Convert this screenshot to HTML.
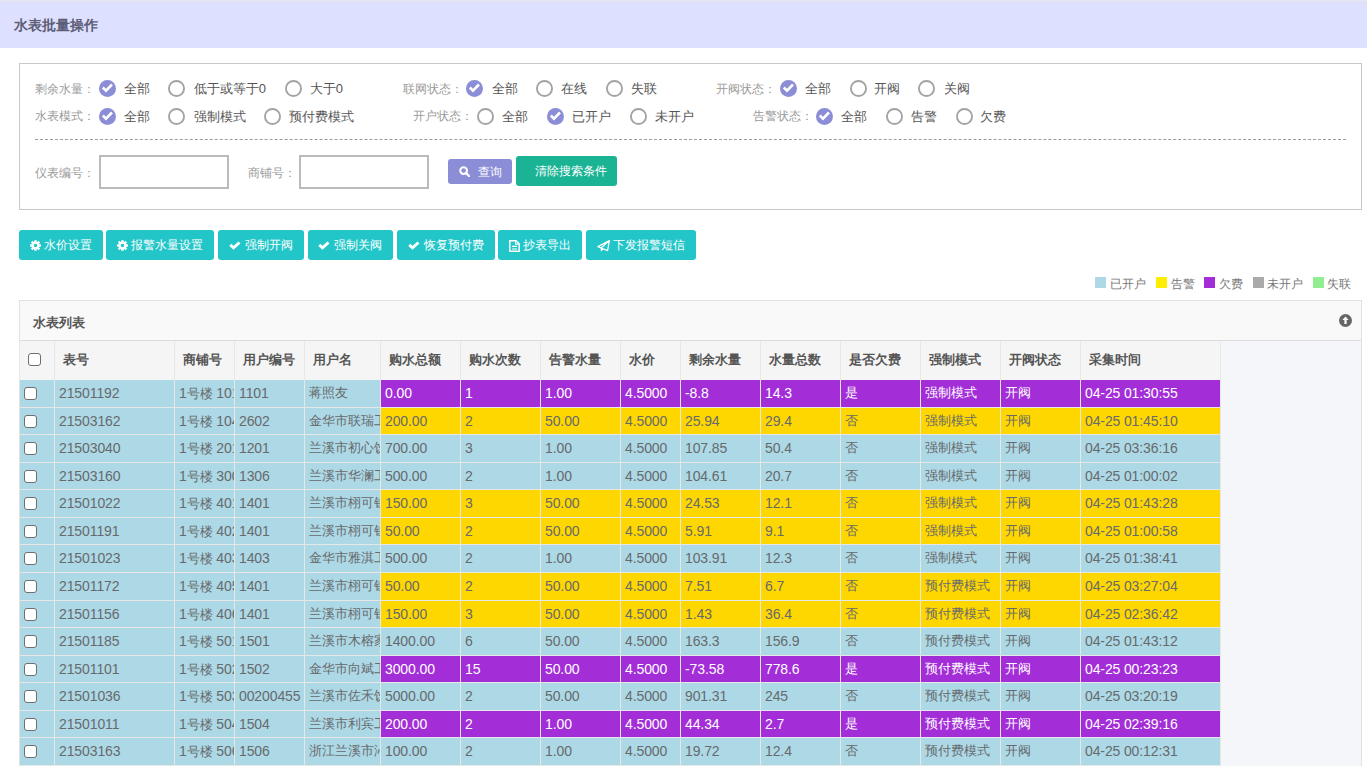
<!DOCTYPE html>
<html><head><meta charset="utf-8"><style>
html,body{margin:0;padding:0;}
body{width:1367px;height:766px;overflow:hidden;position:relative;background:#fff;font-family:"Liberation Sans", sans-serif;}
.ab{position:absolute;}
.hdr{left:0;top:0;width:1367px;height:48px;background:#dde0fe;}
.hdr .strip{position:absolute;left:0;top:0;width:1367px;height:3px;background:linear-gradient(#e4e5f5,#e4e5f5 1px,#e2e4f5 1px,#e2e4f5 2px,#dfe2f5 2px);}
.hdr .t{position:absolute;left:14px;top:15px;font-size:14px;font-weight:bold;color:#5d5d78;line-height:20px;white-space:nowrap;}
.panel{left:19px;top:63px;width:1341px;height:145px;border:1px solid #c8c8c8;background:#fff;}
.glab{font-size:12px;color:#9a9a9a;line-height:20px;white-space:nowrap;}
.rlab{font-size:13px;color:#555;line-height:20px;white-space:nowrap;margin-top:0.5px;}
.dash{left:35px;top:139px;width:1311px;height:0;border-top:1px dashed #9c9c9c;}
.inp{top:155px;width:126px;height:30px;border:2px solid #bbb;background:#fff;}
.qbtn{left:448px;top:159px;width:64px;height:25px;border-radius:3px;background:#8b8dd6;color:#fff;font-size:12px;}
.cbtn{left:516px;top:156px;width:101px;height:30px;border-radius:3px;background:#1ab394;color:#fff;font-size:12px;}
.btn{position:absolute;top:230px;height:30px;box-sizing:border-box;padding-top:1px;border-radius:3px;background:#23c6c8;color:#fff;font-size:12px;display:flex;align-items:center;justify-content:center;white-space:nowrap;}
.btn svg{margin-right:3px;}
.leg{font-size:12px;color:#777;line-height:20px;white-space:nowrap;}
.tpanel{left:19px;top:300px;width:1341px;height:470px;border:1px solid #e2e2e2;border-bottom:none;background:#f5f6fa;}
.ttitle{left:20px;top:301px;width:1341px;height:39px;background:#f9f9f9;border-bottom:1px solid #dcdcdc;}
.th{background:#f5f5f5;box-sizing:border-box;border-left:1px solid #e7e7e7;}
.tht{font-size:13px;font-weight:bold;color:#555;line-height:20px;white-space:nowrap;}
.td{overflow:hidden;white-space:nowrap;font-size:13px;line-height:26.54px;}
.td span{padding-left:4px;}
.n{font-style:normal;font-size:14px;letter-spacing:-0.1px;}
.cb{box-sizing:border-box;border:1px solid #6e6e6e;border-radius:3px;background:#fff;}
.rowbg{left:20px;top:341px;width:1201px;height:425px;background:#e7e7e7;}
</style></head><body>
<div class="ab hdr"><div class="strip"></div><div class="t">水表批量操作</div></div>
<div class="ab panel"></div>
<div class="ab glab" style="left:34.5px;top:78.7px">剩余水量：</div>
<div class="ab" style="left:99px;top:80.2px;width:17px;height:17px"><svg width="17" height="17" viewBox="0 0 17 17"><circle cx="8.5" cy="8.5" r="8.5" fill="#8b8dd6"/><path d="M3.8 7.5 L7 10.7 L13 4.5" fill="none" stroke="#fff" stroke-width="2.6" stroke-linecap="butt" stroke-linejoin="miter"/></svg></div>
<div class="ab rlab" style="left:124px;top:78.7px">全部</div>
<div class="ab" style="left:168px;top:80.2px;width:17px;height:17px"><svg width="17" height="17" viewBox="0 0 17 17"><circle cx="8.5" cy="8.5" r="7.55" fill="#fff" stroke="#a3a3a3" stroke-width="1.9"/></svg></div>
<div class="ab rlab" style="left:193.7px;top:78.7px">低于或等于0</div>
<div class="ab" style="left:285px;top:80.2px;width:17px;height:17px"><svg width="17" height="17" viewBox="0 0 17 17"><circle cx="8.5" cy="8.5" r="7.55" fill="#fff" stroke="#a3a3a3" stroke-width="1.9"/></svg></div>
<div class="ab rlab" style="left:309.8px;top:78.7px">大于0</div>
<div class="ab glab" style="left:34.5px;top:106.2px">水表模式：</div>
<div class="ab" style="left:99px;top:107.7px;width:17px;height:17px"><svg width="17" height="17" viewBox="0 0 17 17"><circle cx="8.5" cy="8.5" r="8.5" fill="#8b8dd6"/><path d="M3.8 7.5 L7 10.7 L13 4.5" fill="none" stroke="#fff" stroke-width="2.6" stroke-linecap="butt" stroke-linejoin="miter"/></svg></div>
<div class="ab rlab" style="left:124px;top:106.2px">全部</div>
<div class="ab" style="left:168px;top:107.7px;width:17px;height:17px"><svg width="17" height="17" viewBox="0 0 17 17"><circle cx="8.5" cy="8.5" r="7.55" fill="#fff" stroke="#a3a3a3" stroke-width="1.9"/></svg></div>
<div class="ab rlab" style="left:193.7px;top:106.2px">强制模式</div>
<div class="ab" style="left:264.3px;top:107.7px;width:17px;height:17px"><svg width="17" height="17" viewBox="0 0 17 17"><circle cx="8.5" cy="8.5" r="7.55" fill="#fff" stroke="#a3a3a3" stroke-width="1.9"/></svg></div>
<div class="ab rlab" style="left:289px;top:106.2px">预付费模式</div>
<div class="ab glab" style="left:402.5px;top:78.7px">联网状态：</div>
<div class="ab" style="left:466px;top:80.2px;width:17px;height:17px"><svg width="17" height="17" viewBox="0 0 17 17"><circle cx="8.5" cy="8.5" r="8.5" fill="#8b8dd6"/><path d="M3.8 7.5 L7 10.7 L13 4.5" fill="none" stroke="#fff" stroke-width="2.6" stroke-linecap="butt" stroke-linejoin="miter"/></svg></div>
<div class="ab rlab" style="left:491.6px;top:78.7px">全部</div>
<div class="ab" style="left:536px;top:80.2px;width:17px;height:17px"><svg width="17" height="17" viewBox="0 0 17 17"><circle cx="8.5" cy="8.5" r="7.55" fill="#fff" stroke="#a3a3a3" stroke-width="1.9"/></svg></div>
<div class="ab rlab" style="left:560.8px;top:78.7px">在线</div>
<div class="ab" style="left:605.8px;top:80.2px;width:17px;height:17px"><svg width="17" height="17" viewBox="0 0 17 17"><circle cx="8.5" cy="8.5" r="7.55" fill="#fff" stroke="#a3a3a3" stroke-width="1.9"/></svg></div>
<div class="ab rlab" style="left:631px;top:78.7px">失联</div>
<div class="ab glab" style="left:412.8px;top:106.2px">开户状态：</div>
<div class="ab" style="left:477px;top:107.7px;width:17px;height:17px"><svg width="17" height="17" viewBox="0 0 17 17"><circle cx="8.5" cy="8.5" r="7.55" fill="#fff" stroke="#a3a3a3" stroke-width="1.9"/></svg></div>
<div class="ab rlab" style="left:502px;top:106.2px">全部</div>
<div class="ab" style="left:546.7px;top:107.7px;width:17px;height:17px"><svg width="17" height="17" viewBox="0 0 17 17"><circle cx="8.5" cy="8.5" r="8.5" fill="#8b8dd6"/><path d="M3.8 7.5 L7 10.7 L13 4.5" fill="none" stroke="#fff" stroke-width="2.6" stroke-linecap="butt" stroke-linejoin="miter"/></svg></div>
<div class="ab rlab" style="left:572.4px;top:106.2px">已开户</div>
<div class="ab" style="left:630px;top:107.7px;width:17px;height:17px"><svg width="17" height="17" viewBox="0 0 17 17"><circle cx="8.5" cy="8.5" r="7.55" fill="#fff" stroke="#a3a3a3" stroke-width="1.9"/></svg></div>
<div class="ab rlab" style="left:654.5px;top:106.2px">未开户</div>
<div class="ab glab" style="left:715.6px;top:78.7px">开阀状态：</div>
<div class="ab" style="left:779.8px;top:80.2px;width:17px;height:17px"><svg width="17" height="17" viewBox="0 0 17 17"><circle cx="8.5" cy="8.5" r="8.5" fill="#8b8dd6"/><path d="M3.8 7.5 L7 10.7 L13 4.5" fill="none" stroke="#fff" stroke-width="2.6" stroke-linecap="butt" stroke-linejoin="miter"/></svg></div>
<div class="ab rlab" style="left:805px;top:78.7px">全部</div>
<div class="ab" style="left:849.8px;top:80.2px;width:17px;height:17px"><svg width="17" height="17" viewBox="0 0 17 17"><circle cx="8.5" cy="8.5" r="7.55" fill="#fff" stroke="#a3a3a3" stroke-width="1.9"/></svg></div>
<div class="ab rlab" style="left:873.5px;top:78.7px">开阀</div>
<div class="ab" style="left:918.4px;top:80.2px;width:17px;height:17px"><svg width="17" height="17" viewBox="0 0 17 17"><circle cx="8.5" cy="8.5" r="7.55" fill="#fff" stroke="#a3a3a3" stroke-width="1.9"/></svg></div>
<div class="ab rlab" style="left:944px;top:78.7px">关阀</div>
<div class="ab glab" style="left:752.8px;top:106.2px">告警状态：</div>
<div class="ab" style="left:816px;top:107.7px;width:17px;height:17px"><svg width="17" height="17" viewBox="0 0 17 17"><circle cx="8.5" cy="8.5" r="8.5" fill="#8b8dd6"/><path d="M3.8 7.5 L7 10.7 L13 4.5" fill="none" stroke="#fff" stroke-width="2.6" stroke-linecap="butt" stroke-linejoin="miter"/></svg></div>
<div class="ab rlab" style="left:841px;top:106.2px">全部</div>
<div class="ab" style="left:886px;top:107.7px;width:17px;height:17px"><svg width="17" height="17" viewBox="0 0 17 17"><circle cx="8.5" cy="8.5" r="7.55" fill="#fff" stroke="#a3a3a3" stroke-width="1.9"/></svg></div>
<div class="ab rlab" style="left:911px;top:106.2px">告警</div>
<div class="ab" style="left:956px;top:107.7px;width:17px;height:17px"><svg width="17" height="17" viewBox="0 0 17 17"><circle cx="8.5" cy="8.5" r="7.55" fill="#fff" stroke="#a3a3a3" stroke-width="1.9"/></svg></div>
<div class="ab rlab" style="left:980px;top:106.2px">欠费</div>
<div class="ab dash"></div>
<div class="ab glab" style="left:35px;top:162.8px">仪表编号：</div>
<div class="ab inp" style="left:99px"></div>
<div class="ab glab" style="left:247.7px;top:162.8px">商铺号：</div>
<div class="ab inp" style="left:299px"></div>
<div class="ab qbtn"><svg class="ab" style="left:11px;top:7px" width="11" height="11" viewBox="0 0 11 11"><circle cx="4.6" cy="4.6" r="3.4" fill="none" stroke="#fff" stroke-width="2"/><path d="M7 7 L10 10" stroke="#fff" stroke-width="2.4" stroke-linecap="round"/></svg><div class="ab" style="left:29.5px;top:2.5px;line-height:20px">查询</div></div>
<div class="ab cbtn"><div class="ab" style="left:18.5px;top:5px;line-height:20px">清除搜索条件</div></div>
<div class="btn" style="left:19px;width:84px"><svg width="11" height="11" viewBox="0 0 16 16"><path fill="#fff" fill-rule="evenodd" d="M13.64 6.28 L15.79 6.20 L15.79 9.80 L13.64 9.72 L13.21 10.77 L14.78 12.24 L12.24 14.78 L10.77 13.21 L9.72 13.64 L9.80 15.79 L6.20 15.79 L6.28 13.64 L5.23 13.21 L3.76 14.78 L1.22 12.24 L2.79 10.77 L2.36 9.72 L0.21 9.80 L0.21 6.20 L2.36 6.28 L2.79 5.23 L1.22 3.76 L3.76 1.22 L5.23 2.79 L6.28 2.36 L6.20 0.21 L9.80 0.21 L9.72 2.36 L10.77 2.79 L12.24 1.22 L14.78 3.76 L13.21 5.23Z M10.5 8 A2.5 2.5 0 1 0 5.5 8 A2.5 2.5 0 1 0 10.5 8Z"/></svg><span>水价设置</span></div>
<div class="btn" style="left:106px;width:108px"><svg width="11" height="11" viewBox="0 0 16 16"><path fill="#fff" fill-rule="evenodd" d="M13.64 6.28 L15.79 6.20 L15.79 9.80 L13.64 9.72 L13.21 10.77 L14.78 12.24 L12.24 14.78 L10.77 13.21 L9.72 13.64 L9.80 15.79 L6.20 15.79 L6.28 13.64 L5.23 13.21 L3.76 14.78 L1.22 12.24 L2.79 10.77 L2.36 9.72 L0.21 9.80 L0.21 6.20 L2.36 6.28 L2.79 5.23 L1.22 3.76 L3.76 1.22 L5.23 2.79 L6.28 2.36 L6.20 0.21 L9.80 0.21 L9.72 2.36 L10.77 2.79 L12.24 1.22 L14.78 3.76 L13.21 5.23Z M10.5 8 A2.5 2.5 0 1 0 5.5 8 A2.5 2.5 0 1 0 10.5 8Z"/></svg><span>报警水量设置</span></div>
<div class="btn" style="left:218px;width:86px"><svg width="12" height="10" viewBox="0 0 12 10" style="position:relative;left:-0.8px;top:-0.6px"><path d="M1.3 4.9 L4.5 7.9 L10.5 2.5" fill="none" stroke="#fff" stroke-width="2.9"/></svg><span>强制开阀</span></div>
<div class="btn" style="left:308px;width:85px"><svg width="12" height="10" viewBox="0 0 12 10" style="position:relative;left:-0.8px;top:-0.6px"><path d="M1.3 4.9 L4.5 7.9 L10.5 2.5" fill="none" stroke="#fff" stroke-width="2.9"/></svg><span>强制关阀</span></div>
<div class="btn" style="left:397px;width:98px"><svg width="12" height="10" viewBox="0 0 12 10" style="position:relative;left:-0.8px;top:-0.6px"><path d="M1.3 4.9 L4.5 7.9 L10.5 2.5" fill="none" stroke="#fff" stroke-width="2.9"/></svg><span>恢复预付费</span></div>
<div class="btn" style="left:498px;width:84px"><svg width="11" height="12" viewBox="0 0 11 12" style="position:relative;top:0.5px"><path d="M.8 .8h6.2L10.2 4V11.2H.8z" fill="none" stroke="#fff" stroke-width="1.5"/><path d="M6.6 .8v3.4h3.6" fill="none" stroke="#fff" stroke-width="1.1"/><path d="M3 6.3h5M3 9h5" fill="none" stroke="#fff" stroke-width="1.2"/></svg><span>抄表导出</span></div>
<div class="btn" style="left:586px;width:110px"><svg width="13" height="12" viewBox="0 0 13 12" style="position:relative;top:0.5px"><path d="M12.4 .6 L.9 6.6 L4 8 L10.6 10.6 Z M12.4 .6 L4 8" fill="none" stroke="#fff" stroke-width="1.2" stroke-linejoin="round"/><path d="M3.6 7.6 L4 11.7 L6.6 9 Z" fill="#fff"/></svg><span>下发报警短信</span></div>
<div class="ab" style="left:1095px;top:277px;width:11px;height:11px;background:#add8e6"></div><div class="ab leg" style="left:1110px;top:273.5px">已开户</div>
<div class="ab" style="left:1156px;top:277px;width:11px;height:11px;background:#ffee00"></div><div class="ab leg" style="left:1170.5px;top:273.5px">告警</div>
<div class="ab" style="left:1204px;top:277px;width:11px;height:11px;background:#a32ed8"></div><div class="ab leg" style="left:1218.8px;top:273.5px">欠费</div>
<div class="ab" style="left:1253px;top:277px;width:11px;height:11px;background:#aaaaaa"></div><div class="ab leg" style="left:1267px;top:273.5px">未开户</div>
<div class="ab" style="left:1313px;top:277px;width:11px;height:11px;background:#90ee90"></div><div class="ab leg" style="left:1327.4px;top:273.5px">失联</div>
<div class="ab tpanel"></div>
<div class="ab ttitle"></div>
<div class="ab" style="left:33px;top:312.5px;font-size:13px;font-weight:bold;color:#555;line-height:20px">水表列表</div>
<svg class="ab" style="left:1339px;top:314px" width="13" height="13" viewBox="0 0 13 13"><circle cx="6.5" cy="6.5" r="6.5" fill="#666"/><path d="M6.5 2.6 L9.6 6 L7.6 6 L7.6 10 L5.4 10 L5.4 6 L3.4 6 Z" fill="#fff"/></svg>
<div class="ab rowbg"></div>
<div class="ab th" style="left:19px;top:341px;width:35px;height:39px"></div>
<div class="ab cb" style="left:28px;top:353px;width:13px;height:13px"></div>
<div class="ab th" style="left:54px;top:341px;width:120px;height:39px"></div>
<div class="ab tht" style="left:63px;top:350px">表号</div>
<div class="ab th" style="left:174px;top:341px;width:60px;height:39px"></div>
<div class="ab tht" style="left:183px;top:350px">商铺号</div>
<div class="ab th" style="left:234px;top:341px;width:70px;height:39px"></div>
<div class="ab tht" style="left:243px;top:350px">用户编号</div>
<div class="ab th" style="left:304px;top:341px;width:76px;height:39px"></div>
<div class="ab tht" style="left:313px;top:350px">用户名</div>
<div class="ab th" style="left:380px;top:341px;width:80px;height:39px"></div>
<div class="ab tht" style="left:389px;top:350px">购水总额</div>
<div class="ab th" style="left:460px;top:341px;width:80px;height:39px"></div>
<div class="ab tht" style="left:469px;top:350px">购水次数</div>
<div class="ab th" style="left:540px;top:341px;width:80px;height:39px"></div>
<div class="ab tht" style="left:549px;top:350px">告警水量</div>
<div class="ab th" style="left:620px;top:341px;width:60px;height:39px"></div>
<div class="ab tht" style="left:629px;top:350px">水价</div>
<div class="ab th" style="left:680px;top:341px;width:80px;height:39px"></div>
<div class="ab tht" style="left:689px;top:350px">剩余水量</div>
<div class="ab th" style="left:760px;top:341px;width:80px;height:39px"></div>
<div class="ab tht" style="left:769px;top:350px">水量总数</div>
<div class="ab th" style="left:840px;top:341px;width:80px;height:39px"></div>
<div class="ab tht" style="left:849px;top:350px">是否欠费</div>
<div class="ab th" style="left:920px;top:341px;width:80px;height:39px"></div>
<div class="ab tht" style="left:929px;top:350px">强制模式</div>
<div class="ab th" style="left:1000px;top:341px;width:80px;height:39px"></div>
<div class="ab tht" style="left:1009px;top:350px">开阀状态</div>
<div class="ab th" style="left:1080px;top:341px;width:140px;height:39px"></div>
<div class="ab tht" style="left:1089px;top:350px">采集时间</div>
<div class="ab td" style="left:20px;top:380.22px;width:34px;height:26.54px;background:#add8e6;color:#676a6c"></div>
<div class="ab td" style="left:55px;top:380.22px;width:119px;height:26.54px;background:#add8e6;color:#676a6c"><span><i class="n">21501192</i></span></div>
<div class="ab td" style="left:175px;top:380.22px;width:59px;height:26.54px;background:#add8e6;color:#676a6c"><span><i class="n">1</i>号楼 <i class="n">1011</i></span></div>
<div class="ab td" style="left:235px;top:380.22px;width:69px;height:26.54px;background:#add8e6;color:#676a6c"><span><i class="n">1101</i></span></div>
<div class="ab td" style="left:305px;top:380.22px;width:75px;height:26.54px;background:#add8e6;color:#676a6c"><span>蒋照友</span></div>
<div class="ab td" style="left:381px;top:380.22px;width:79px;height:26.54px;background:#a32ed8;color:#ffffff"><span><i class="n">0.00</i></span></div>
<div class="ab td" style="left:461px;top:380.22px;width:79px;height:26.54px;background:#a32ed8;color:#ffffff"><span><i class="n">1</i></span></div>
<div class="ab td" style="left:541px;top:380.22px;width:79px;height:26.54px;background:#a32ed8;color:#ffffff"><span><i class="n">1.00</i></span></div>
<div class="ab td" style="left:621px;top:380.22px;width:59px;height:26.54px;background:#a32ed8;color:#ffffff"><span><i class="n">4.5000</i></span></div>
<div class="ab td" style="left:681px;top:380.22px;width:79px;height:26.54px;background:#a32ed8;color:#ffffff"><span><i class="n">-8.8</i></span></div>
<div class="ab td" style="left:761px;top:380.22px;width:79px;height:26.54px;background:#a32ed8;color:#ffffff"><span><i class="n">14.3</i></span></div>
<div class="ab td" style="left:841px;top:380.22px;width:79px;height:26.54px;background:#a32ed8;color:#ffffff"><span>是</span></div>
<div class="ab td" style="left:921px;top:380.22px;width:79px;height:26.54px;background:#a32ed8;color:#ffffff"><span>强制模式</span></div>
<div class="ab td" style="left:1001px;top:380.22px;width:79px;height:26.54px;background:#a32ed8;color:#ffffff"><span>开阀</span></div>
<div class="ab td" style="left:1081px;top:380.22px;width:139px;height:26.54px;background:#a32ed8;color:#ffffff"><span><i class="n">04-25</i> <i class="n">01:30:55</i></span></div>
<div class="ab cb" style="left:24px;top:387.22px;width:13px;height:13px"></div>
<div class="ab td" style="left:20px;top:407.76px;width:34px;height:26.54px;background:#add8e6;color:#676a6c"></div>
<div class="ab td" style="left:55px;top:407.76px;width:119px;height:26.54px;background:#add8e6;color:#676a6c"><span><i class="n">21503162</i></span></div>
<div class="ab td" style="left:175px;top:407.76px;width:59px;height:26.54px;background:#add8e6;color:#676a6c"><span><i class="n">1</i>号楼 <i class="n">1042</i></span></div>
<div class="ab td" style="left:235px;top:407.76px;width:69px;height:26.54px;background:#add8e6;color:#676a6c"><span><i class="n">2602</i></span></div>
<div class="ab td" style="left:305px;top:407.76px;width:75px;height:26.54px;background:#add8e6;color:#676a6c"><span>金华市联瑞工贸</span></div>
<div class="ab td" style="left:381px;top:407.76px;width:79px;height:26.54px;background:#ffd700;color:#676a6c"><span><i class="n">200.00</i></span></div>
<div class="ab td" style="left:461px;top:407.76px;width:79px;height:26.54px;background:#ffd700;color:#676a6c"><span><i class="n">2</i></span></div>
<div class="ab td" style="left:541px;top:407.76px;width:79px;height:26.54px;background:#ffd700;color:#676a6c"><span><i class="n">50.00</i></span></div>
<div class="ab td" style="left:621px;top:407.76px;width:59px;height:26.54px;background:#ffd700;color:#676a6c"><span><i class="n">4.5000</i></span></div>
<div class="ab td" style="left:681px;top:407.76px;width:79px;height:26.54px;background:#ffd700;color:#676a6c"><span><i class="n">25.94</i></span></div>
<div class="ab td" style="left:761px;top:407.76px;width:79px;height:26.54px;background:#ffd700;color:#676a6c"><span><i class="n">29.4</i></span></div>
<div class="ab td" style="left:841px;top:407.76px;width:79px;height:26.54px;background:#ffd700;color:#676a6c"><span>否</span></div>
<div class="ab td" style="left:921px;top:407.76px;width:79px;height:26.54px;background:#ffd700;color:#676a6c"><span>强制模式</span></div>
<div class="ab td" style="left:1001px;top:407.76px;width:79px;height:26.54px;background:#ffd700;color:#676a6c"><span>开阀</span></div>
<div class="ab td" style="left:1081px;top:407.76px;width:139px;height:26.54px;background:#ffd700;color:#676a6c"><span><i class="n">04-25</i> <i class="n">01:45:10</i></span></div>
<div class="ab cb" style="left:24px;top:414.76px;width:13px;height:13px"></div>
<div class="ab td" style="left:20px;top:435.30px;width:34px;height:26.54px;background:#add8e6;color:#676a6c"></div>
<div class="ab td" style="left:55px;top:435.30px;width:119px;height:26.54px;background:#add8e6;color:#676a6c"><span><i class="n">21503040</i></span></div>
<div class="ab td" style="left:175px;top:435.30px;width:59px;height:26.54px;background:#add8e6;color:#676a6c"><span><i class="n">1</i>号楼 <i class="n">2012</i></span></div>
<div class="ab td" style="left:235px;top:435.30px;width:69px;height:26.54px;background:#add8e6;color:#676a6c"><span><i class="n">1201</i></span></div>
<div class="ab td" style="left:305px;top:435.30px;width:75px;height:26.54px;background:#add8e6;color:#676a6c"><span>兰溪市初心饮品</span></div>
<div class="ab td" style="left:381px;top:435.30px;width:79px;height:26.54px;background:#add8e6;color:#676a6c"><span><i class="n">700.00</i></span></div>
<div class="ab td" style="left:461px;top:435.30px;width:79px;height:26.54px;background:#add8e6;color:#676a6c"><span><i class="n">3</i></span></div>
<div class="ab td" style="left:541px;top:435.30px;width:79px;height:26.54px;background:#add8e6;color:#676a6c"><span><i class="n">1.00</i></span></div>
<div class="ab td" style="left:621px;top:435.30px;width:59px;height:26.54px;background:#add8e6;color:#676a6c"><span><i class="n">4.5000</i></span></div>
<div class="ab td" style="left:681px;top:435.30px;width:79px;height:26.54px;background:#add8e6;color:#676a6c"><span><i class="n">107.85</i></span></div>
<div class="ab td" style="left:761px;top:435.30px;width:79px;height:26.54px;background:#add8e6;color:#676a6c"><span><i class="n">50.4</i></span></div>
<div class="ab td" style="left:841px;top:435.30px;width:79px;height:26.54px;background:#add8e6;color:#676a6c"><span>否</span></div>
<div class="ab td" style="left:921px;top:435.30px;width:79px;height:26.54px;background:#add8e6;color:#676a6c"><span>强制模式</span></div>
<div class="ab td" style="left:1001px;top:435.30px;width:79px;height:26.54px;background:#add8e6;color:#676a6c"><span>开阀</span></div>
<div class="ab td" style="left:1081px;top:435.30px;width:139px;height:26.54px;background:#add8e6;color:#676a6c"><span><i class="n">04-25</i> <i class="n">03:36:16</i></span></div>
<div class="ab cb" style="left:24px;top:442.30px;width:13px;height:13px"></div>
<div class="ab td" style="left:20px;top:462.84px;width:34px;height:26.54px;background:#add8e6;color:#676a6c"></div>
<div class="ab td" style="left:55px;top:462.84px;width:119px;height:26.54px;background:#add8e6;color:#676a6c"><span><i class="n">21503160</i></span></div>
<div class="ab td" style="left:175px;top:462.84px;width:59px;height:26.54px;background:#add8e6;color:#676a6c"><span><i class="n">1</i>号楼 <i class="n">3006</i></span></div>
<div class="ab td" style="left:235px;top:462.84px;width:69px;height:26.54px;background:#add8e6;color:#676a6c"><span><i class="n">1306</i></span></div>
<div class="ab td" style="left:305px;top:462.84px;width:75px;height:26.54px;background:#add8e6;color:#676a6c"><span>兰溪市华澜工贸</span></div>
<div class="ab td" style="left:381px;top:462.84px;width:79px;height:26.54px;background:#add8e6;color:#676a6c"><span><i class="n">500.00</i></span></div>
<div class="ab td" style="left:461px;top:462.84px;width:79px;height:26.54px;background:#add8e6;color:#676a6c"><span><i class="n">2</i></span></div>
<div class="ab td" style="left:541px;top:462.84px;width:79px;height:26.54px;background:#add8e6;color:#676a6c"><span><i class="n">1.00</i></span></div>
<div class="ab td" style="left:621px;top:462.84px;width:59px;height:26.54px;background:#add8e6;color:#676a6c"><span><i class="n">4.5000</i></span></div>
<div class="ab td" style="left:681px;top:462.84px;width:79px;height:26.54px;background:#add8e6;color:#676a6c"><span><i class="n">104.61</i></span></div>
<div class="ab td" style="left:761px;top:462.84px;width:79px;height:26.54px;background:#add8e6;color:#676a6c"><span><i class="n">20.7</i></span></div>
<div class="ab td" style="left:841px;top:462.84px;width:79px;height:26.54px;background:#add8e6;color:#676a6c"><span>否</span></div>
<div class="ab td" style="left:921px;top:462.84px;width:79px;height:26.54px;background:#add8e6;color:#676a6c"><span>强制模式</span></div>
<div class="ab td" style="left:1001px;top:462.84px;width:79px;height:26.54px;background:#add8e6;color:#676a6c"><span>开阀</span></div>
<div class="ab td" style="left:1081px;top:462.84px;width:139px;height:26.54px;background:#add8e6;color:#676a6c"><span><i class="n">04-25</i> <i class="n">01:00:02</i></span></div>
<div class="ab cb" style="left:24px;top:469.84px;width:13px;height:13px"></div>
<div class="ab td" style="left:20px;top:490.38px;width:34px;height:26.54px;background:#add8e6;color:#676a6c"></div>
<div class="ab td" style="left:55px;top:490.38px;width:119px;height:26.54px;background:#add8e6;color:#676a6c"><span><i class="n">21501022</i></span></div>
<div class="ab td" style="left:175px;top:490.38px;width:59px;height:26.54px;background:#add8e6;color:#676a6c"><span><i class="n">1</i>号楼 <i class="n">4011</i></span></div>
<div class="ab td" style="left:235px;top:490.38px;width:69px;height:26.54px;background:#add8e6;color:#676a6c"><span><i class="n">1401</i></span></div>
<div class="ab td" style="left:305px;top:490.38px;width:75px;height:26.54px;background:#add8e6;color:#676a6c"><span>兰溪市栩可钱庄</span></div>
<div class="ab td" style="left:381px;top:490.38px;width:79px;height:26.54px;background:#ffd700;color:#676a6c"><span><i class="n">150.00</i></span></div>
<div class="ab td" style="left:461px;top:490.38px;width:79px;height:26.54px;background:#ffd700;color:#676a6c"><span><i class="n">3</i></span></div>
<div class="ab td" style="left:541px;top:490.38px;width:79px;height:26.54px;background:#ffd700;color:#676a6c"><span><i class="n">50.00</i></span></div>
<div class="ab td" style="left:621px;top:490.38px;width:59px;height:26.54px;background:#ffd700;color:#676a6c"><span><i class="n">4.5000</i></span></div>
<div class="ab td" style="left:681px;top:490.38px;width:79px;height:26.54px;background:#ffd700;color:#676a6c"><span><i class="n">24.53</i></span></div>
<div class="ab td" style="left:761px;top:490.38px;width:79px;height:26.54px;background:#ffd700;color:#676a6c"><span><i class="n">12.1</i></span></div>
<div class="ab td" style="left:841px;top:490.38px;width:79px;height:26.54px;background:#ffd700;color:#676a6c"><span>否</span></div>
<div class="ab td" style="left:921px;top:490.38px;width:79px;height:26.54px;background:#ffd700;color:#676a6c"><span>强制模式</span></div>
<div class="ab td" style="left:1001px;top:490.38px;width:79px;height:26.54px;background:#ffd700;color:#676a6c"><span>开阀</span></div>
<div class="ab td" style="left:1081px;top:490.38px;width:139px;height:26.54px;background:#ffd700;color:#676a6c"><span><i class="n">04-25</i> <i class="n">01:43:28</i></span></div>
<div class="ab cb" style="left:24px;top:497.38px;width:13px;height:13px"></div>
<div class="ab td" style="left:20px;top:517.92px;width:34px;height:26.54px;background:#add8e6;color:#676a6c"></div>
<div class="ab td" style="left:55px;top:517.92px;width:119px;height:26.54px;background:#add8e6;color:#676a6c"><span><i class="n">21501191</i></span></div>
<div class="ab td" style="left:175px;top:517.92px;width:59px;height:26.54px;background:#add8e6;color:#676a6c"><span><i class="n">1</i>号楼 <i class="n">4022</i></span></div>
<div class="ab td" style="left:235px;top:517.92px;width:69px;height:26.54px;background:#add8e6;color:#676a6c"><span><i class="n">1401</i></span></div>
<div class="ab td" style="left:305px;top:517.92px;width:75px;height:26.54px;background:#add8e6;color:#676a6c"><span>兰溪市栩可钱庄</span></div>
<div class="ab td" style="left:381px;top:517.92px;width:79px;height:26.54px;background:#ffd700;color:#676a6c"><span><i class="n">50.00</i></span></div>
<div class="ab td" style="left:461px;top:517.92px;width:79px;height:26.54px;background:#ffd700;color:#676a6c"><span><i class="n">2</i></span></div>
<div class="ab td" style="left:541px;top:517.92px;width:79px;height:26.54px;background:#ffd700;color:#676a6c"><span><i class="n">50.00</i></span></div>
<div class="ab td" style="left:621px;top:517.92px;width:59px;height:26.54px;background:#ffd700;color:#676a6c"><span><i class="n">4.5000</i></span></div>
<div class="ab td" style="left:681px;top:517.92px;width:79px;height:26.54px;background:#ffd700;color:#676a6c"><span><i class="n">5.91</i></span></div>
<div class="ab td" style="left:761px;top:517.92px;width:79px;height:26.54px;background:#ffd700;color:#676a6c"><span><i class="n">9.1</i></span></div>
<div class="ab td" style="left:841px;top:517.92px;width:79px;height:26.54px;background:#ffd700;color:#676a6c"><span>否</span></div>
<div class="ab td" style="left:921px;top:517.92px;width:79px;height:26.54px;background:#ffd700;color:#676a6c"><span>强制模式</span></div>
<div class="ab td" style="left:1001px;top:517.92px;width:79px;height:26.54px;background:#ffd700;color:#676a6c"><span>开阀</span></div>
<div class="ab td" style="left:1081px;top:517.92px;width:139px;height:26.54px;background:#ffd700;color:#676a6c"><span><i class="n">04-25</i> <i class="n">01:00:58</i></span></div>
<div class="ab cb" style="left:24px;top:524.92px;width:13px;height:13px"></div>
<div class="ab td" style="left:20px;top:545.46px;width:34px;height:26.54px;background:#add8e6;color:#676a6c"></div>
<div class="ab td" style="left:55px;top:545.46px;width:119px;height:26.54px;background:#add8e6;color:#676a6c"><span><i class="n">21501023</i></span></div>
<div class="ab td" style="left:175px;top:545.46px;width:59px;height:26.54px;background:#add8e6;color:#676a6c"><span><i class="n">1</i>号楼 <i class="n">4033</i></span></div>
<div class="ab td" style="left:235px;top:545.46px;width:69px;height:26.54px;background:#add8e6;color:#676a6c"><span><i class="n">1403</i></span></div>
<div class="ab td" style="left:305px;top:545.46px;width:75px;height:26.54px;background:#add8e6;color:#676a6c"><span>金华市雅淇工贸</span></div>
<div class="ab td" style="left:381px;top:545.46px;width:79px;height:26.54px;background:#add8e6;color:#676a6c"><span><i class="n">500.00</i></span></div>
<div class="ab td" style="left:461px;top:545.46px;width:79px;height:26.54px;background:#add8e6;color:#676a6c"><span><i class="n">2</i></span></div>
<div class="ab td" style="left:541px;top:545.46px;width:79px;height:26.54px;background:#add8e6;color:#676a6c"><span><i class="n">1.00</i></span></div>
<div class="ab td" style="left:621px;top:545.46px;width:59px;height:26.54px;background:#add8e6;color:#676a6c"><span><i class="n">4.5000</i></span></div>
<div class="ab td" style="left:681px;top:545.46px;width:79px;height:26.54px;background:#add8e6;color:#676a6c"><span><i class="n">103.91</i></span></div>
<div class="ab td" style="left:761px;top:545.46px;width:79px;height:26.54px;background:#add8e6;color:#676a6c"><span><i class="n">12.3</i></span></div>
<div class="ab td" style="left:841px;top:545.46px;width:79px;height:26.54px;background:#add8e6;color:#676a6c"><span>否</span></div>
<div class="ab td" style="left:921px;top:545.46px;width:79px;height:26.54px;background:#add8e6;color:#676a6c"><span>强制模式</span></div>
<div class="ab td" style="left:1001px;top:545.46px;width:79px;height:26.54px;background:#add8e6;color:#676a6c"><span>开阀</span></div>
<div class="ab td" style="left:1081px;top:545.46px;width:139px;height:26.54px;background:#add8e6;color:#676a6c"><span><i class="n">04-25</i> <i class="n">01:38:41</i></span></div>
<div class="ab cb" style="left:24px;top:552.46px;width:13px;height:13px"></div>
<div class="ab td" style="left:20px;top:573.00px;width:34px;height:26.54px;background:#add8e6;color:#676a6c"></div>
<div class="ab td" style="left:55px;top:573.00px;width:119px;height:26.54px;background:#add8e6;color:#676a6c"><span><i class="n">21501172</i></span></div>
<div class="ab td" style="left:175px;top:573.00px;width:59px;height:26.54px;background:#add8e6;color:#676a6c"><span><i class="n">1</i>号楼 <i class="n">4055</i></span></div>
<div class="ab td" style="left:235px;top:573.00px;width:69px;height:26.54px;background:#add8e6;color:#676a6c"><span><i class="n">1401</i></span></div>
<div class="ab td" style="left:305px;top:573.00px;width:75px;height:26.54px;background:#add8e6;color:#676a6c"><span>兰溪市栩可钱庄</span></div>
<div class="ab td" style="left:381px;top:573.00px;width:79px;height:26.54px;background:#ffd700;color:#676a6c"><span><i class="n">50.00</i></span></div>
<div class="ab td" style="left:461px;top:573.00px;width:79px;height:26.54px;background:#ffd700;color:#676a6c"><span><i class="n">2</i></span></div>
<div class="ab td" style="left:541px;top:573.00px;width:79px;height:26.54px;background:#ffd700;color:#676a6c"><span><i class="n">50.00</i></span></div>
<div class="ab td" style="left:621px;top:573.00px;width:59px;height:26.54px;background:#ffd700;color:#676a6c"><span><i class="n">4.5000</i></span></div>
<div class="ab td" style="left:681px;top:573.00px;width:79px;height:26.54px;background:#ffd700;color:#676a6c"><span><i class="n">7.51</i></span></div>
<div class="ab td" style="left:761px;top:573.00px;width:79px;height:26.54px;background:#ffd700;color:#676a6c"><span><i class="n">6.7</i></span></div>
<div class="ab td" style="left:841px;top:573.00px;width:79px;height:26.54px;background:#ffd700;color:#676a6c"><span>否</span></div>
<div class="ab td" style="left:921px;top:573.00px;width:79px;height:26.54px;background:#ffd700;color:#676a6c"><span>预付费模式</span></div>
<div class="ab td" style="left:1001px;top:573.00px;width:79px;height:26.54px;background:#ffd700;color:#676a6c"><span>开阀</span></div>
<div class="ab td" style="left:1081px;top:573.00px;width:139px;height:26.54px;background:#ffd700;color:#676a6c"><span><i class="n">04-25</i> <i class="n">03:27:04</i></span></div>
<div class="ab cb" style="left:24px;top:580.00px;width:13px;height:13px"></div>
<div class="ab td" style="left:20px;top:600.54px;width:34px;height:26.54px;background:#add8e6;color:#676a6c"></div>
<div class="ab td" style="left:55px;top:600.54px;width:119px;height:26.54px;background:#add8e6;color:#676a6c"><span><i class="n">21501156</i></span></div>
<div class="ab td" style="left:175px;top:600.54px;width:59px;height:26.54px;background:#add8e6;color:#676a6c"><span><i class="n">1</i>号楼 <i class="n">4066</i></span></div>
<div class="ab td" style="left:235px;top:600.54px;width:69px;height:26.54px;background:#add8e6;color:#676a6c"><span><i class="n">1401</i></span></div>
<div class="ab td" style="left:305px;top:600.54px;width:75px;height:26.54px;background:#add8e6;color:#676a6c"><span>兰溪市栩可钱庄</span></div>
<div class="ab td" style="left:381px;top:600.54px;width:79px;height:26.54px;background:#ffd700;color:#676a6c"><span><i class="n">150.00</i></span></div>
<div class="ab td" style="left:461px;top:600.54px;width:79px;height:26.54px;background:#ffd700;color:#676a6c"><span><i class="n">3</i></span></div>
<div class="ab td" style="left:541px;top:600.54px;width:79px;height:26.54px;background:#ffd700;color:#676a6c"><span><i class="n">50.00</i></span></div>
<div class="ab td" style="left:621px;top:600.54px;width:59px;height:26.54px;background:#ffd700;color:#676a6c"><span><i class="n">4.5000</i></span></div>
<div class="ab td" style="left:681px;top:600.54px;width:79px;height:26.54px;background:#ffd700;color:#676a6c"><span><i class="n">1.43</i></span></div>
<div class="ab td" style="left:761px;top:600.54px;width:79px;height:26.54px;background:#ffd700;color:#676a6c"><span><i class="n">36.4</i></span></div>
<div class="ab td" style="left:841px;top:600.54px;width:79px;height:26.54px;background:#ffd700;color:#676a6c"><span>否</span></div>
<div class="ab td" style="left:921px;top:600.54px;width:79px;height:26.54px;background:#ffd700;color:#676a6c"><span>预付费模式</span></div>
<div class="ab td" style="left:1001px;top:600.54px;width:79px;height:26.54px;background:#ffd700;color:#676a6c"><span>开阀</span></div>
<div class="ab td" style="left:1081px;top:600.54px;width:139px;height:26.54px;background:#ffd700;color:#676a6c"><span><i class="n">04-25</i> <i class="n">02:36:42</i></span></div>
<div class="ab cb" style="left:24px;top:607.54px;width:13px;height:13px"></div>
<div class="ab td" style="left:20px;top:628.08px;width:34px;height:26.54px;background:#add8e6;color:#676a6c"></div>
<div class="ab td" style="left:55px;top:628.08px;width:119px;height:26.54px;background:#add8e6;color:#676a6c"><span><i class="n">21501185</i></span></div>
<div class="ab td" style="left:175px;top:628.08px;width:59px;height:26.54px;background:#add8e6;color:#676a6c"><span><i class="n">1</i>号楼 <i class="n">5011</i></span></div>
<div class="ab td" style="left:235px;top:628.08px;width:69px;height:26.54px;background:#add8e6;color:#676a6c"><span><i class="n">1501</i></span></div>
<div class="ab td" style="left:305px;top:628.08px;width:75px;height:26.54px;background:#add8e6;color:#676a6c"><span>兰溪市木榕家居</span></div>
<div class="ab td" style="left:381px;top:628.08px;width:79px;height:26.54px;background:#add8e6;color:#676a6c"><span><i class="n">1400.00</i></span></div>
<div class="ab td" style="left:461px;top:628.08px;width:79px;height:26.54px;background:#add8e6;color:#676a6c"><span><i class="n">6</i></span></div>
<div class="ab td" style="left:541px;top:628.08px;width:79px;height:26.54px;background:#add8e6;color:#676a6c"><span><i class="n">50.00</i></span></div>
<div class="ab td" style="left:621px;top:628.08px;width:59px;height:26.54px;background:#add8e6;color:#676a6c"><span><i class="n">4.5000</i></span></div>
<div class="ab td" style="left:681px;top:628.08px;width:79px;height:26.54px;background:#add8e6;color:#676a6c"><span><i class="n">163.3</i></span></div>
<div class="ab td" style="left:761px;top:628.08px;width:79px;height:26.54px;background:#add8e6;color:#676a6c"><span><i class="n">156.9</i></span></div>
<div class="ab td" style="left:841px;top:628.08px;width:79px;height:26.54px;background:#add8e6;color:#676a6c"><span>否</span></div>
<div class="ab td" style="left:921px;top:628.08px;width:79px;height:26.54px;background:#add8e6;color:#676a6c"><span>预付费模式</span></div>
<div class="ab td" style="left:1001px;top:628.08px;width:79px;height:26.54px;background:#add8e6;color:#676a6c"><span>开阀</span></div>
<div class="ab td" style="left:1081px;top:628.08px;width:139px;height:26.54px;background:#add8e6;color:#676a6c"><span><i class="n">04-25</i> <i class="n">01:43:12</i></span></div>
<div class="ab cb" style="left:24px;top:635.08px;width:13px;height:13px"></div>
<div class="ab td" style="left:20px;top:655.62px;width:34px;height:26.54px;background:#add8e6;color:#676a6c"></div>
<div class="ab td" style="left:55px;top:655.62px;width:119px;height:26.54px;background:#add8e6;color:#676a6c"><span><i class="n">21501101</i></span></div>
<div class="ab td" style="left:175px;top:655.62px;width:59px;height:26.54px;background:#add8e6;color:#676a6c"><span><i class="n">1</i>号楼 <i class="n">5022</i></span></div>
<div class="ab td" style="left:235px;top:655.62px;width:69px;height:26.54px;background:#add8e6;color:#676a6c"><span><i class="n">1502</i></span></div>
<div class="ab td" style="left:305px;top:655.62px;width:75px;height:26.54px;background:#add8e6;color:#676a6c"><span>金华市向斌工贸</span></div>
<div class="ab td" style="left:381px;top:655.62px;width:79px;height:26.54px;background:#a32ed8;color:#ffffff"><span><i class="n">3000.00</i></span></div>
<div class="ab td" style="left:461px;top:655.62px;width:79px;height:26.54px;background:#a32ed8;color:#ffffff"><span><i class="n">15</i></span></div>
<div class="ab td" style="left:541px;top:655.62px;width:79px;height:26.54px;background:#a32ed8;color:#ffffff"><span><i class="n">50.00</i></span></div>
<div class="ab td" style="left:621px;top:655.62px;width:59px;height:26.54px;background:#a32ed8;color:#ffffff"><span><i class="n">4.5000</i></span></div>
<div class="ab td" style="left:681px;top:655.62px;width:79px;height:26.54px;background:#a32ed8;color:#ffffff"><span><i class="n">-73.58</i></span></div>
<div class="ab td" style="left:761px;top:655.62px;width:79px;height:26.54px;background:#a32ed8;color:#ffffff"><span><i class="n">778.6</i></span></div>
<div class="ab td" style="left:841px;top:655.62px;width:79px;height:26.54px;background:#a32ed8;color:#ffffff"><span>是</span></div>
<div class="ab td" style="left:921px;top:655.62px;width:79px;height:26.54px;background:#a32ed8;color:#ffffff"><span>预付费模式</span></div>
<div class="ab td" style="left:1001px;top:655.62px;width:79px;height:26.54px;background:#a32ed8;color:#ffffff"><span>开阀</span></div>
<div class="ab td" style="left:1081px;top:655.62px;width:139px;height:26.54px;background:#a32ed8;color:#ffffff"><span><i class="n">04-25</i> <i class="n">00:23:23</i></span></div>
<div class="ab cb" style="left:24px;top:662.62px;width:13px;height:13px"></div>
<div class="ab td" style="left:20px;top:683.16px;width:34px;height:26.54px;background:#add8e6;color:#676a6c"></div>
<div class="ab td" style="left:55px;top:683.16px;width:119px;height:26.54px;background:#add8e6;color:#676a6c"><span><i class="n">21501036</i></span></div>
<div class="ab td" style="left:175px;top:683.16px;width:59px;height:26.54px;background:#add8e6;color:#676a6c"><span><i class="n">1</i>号楼 <i class="n">5033</i></span></div>
<div class="ab td" style="left:235px;top:683.16px;width:69px;height:26.54px;background:#add8e6;color:#676a6c"><span><i class="n">00200455</i></span></div>
<div class="ab td" style="left:305px;top:683.16px;width:75px;height:26.54px;background:#add8e6;color:#676a6c"><span>兰溪市佐禾饮品</span></div>
<div class="ab td" style="left:381px;top:683.16px;width:79px;height:26.54px;background:#add8e6;color:#676a6c"><span><i class="n">5000.00</i></span></div>
<div class="ab td" style="left:461px;top:683.16px;width:79px;height:26.54px;background:#add8e6;color:#676a6c"><span><i class="n">2</i></span></div>
<div class="ab td" style="left:541px;top:683.16px;width:79px;height:26.54px;background:#add8e6;color:#676a6c"><span><i class="n">50.00</i></span></div>
<div class="ab td" style="left:621px;top:683.16px;width:59px;height:26.54px;background:#add8e6;color:#676a6c"><span><i class="n">4.5000</i></span></div>
<div class="ab td" style="left:681px;top:683.16px;width:79px;height:26.54px;background:#add8e6;color:#676a6c"><span><i class="n">901.31</i></span></div>
<div class="ab td" style="left:761px;top:683.16px;width:79px;height:26.54px;background:#add8e6;color:#676a6c"><span><i class="n">245</i></span></div>
<div class="ab td" style="left:841px;top:683.16px;width:79px;height:26.54px;background:#add8e6;color:#676a6c"><span>否</span></div>
<div class="ab td" style="left:921px;top:683.16px;width:79px;height:26.54px;background:#add8e6;color:#676a6c"><span>预付费模式</span></div>
<div class="ab td" style="left:1001px;top:683.16px;width:79px;height:26.54px;background:#add8e6;color:#676a6c"><span>开阀</span></div>
<div class="ab td" style="left:1081px;top:683.16px;width:139px;height:26.54px;background:#add8e6;color:#676a6c"><span><i class="n">04-25</i> <i class="n">03:20:19</i></span></div>
<div class="ab cb" style="left:24px;top:690.16px;width:13px;height:13px"></div>
<div class="ab td" style="left:20px;top:710.70px;width:34px;height:26.54px;background:#add8e6;color:#676a6c"></div>
<div class="ab td" style="left:55px;top:710.70px;width:119px;height:26.54px;background:#add8e6;color:#676a6c"><span><i class="n">21501011</i></span></div>
<div class="ab td" style="left:175px;top:710.70px;width:59px;height:26.54px;background:#add8e6;color:#676a6c"><span><i class="n">1</i>号楼 <i class="n">5044</i></span></div>
<div class="ab td" style="left:235px;top:710.70px;width:69px;height:26.54px;background:#add8e6;color:#676a6c"><span><i class="n">1504</i></span></div>
<div class="ab td" style="left:305px;top:710.70px;width:75px;height:26.54px;background:#add8e6;color:#676a6c"><span>兰溪市利宾工贸</span></div>
<div class="ab td" style="left:381px;top:710.70px;width:79px;height:26.54px;background:#a32ed8;color:#ffffff"><span><i class="n">200.00</i></span></div>
<div class="ab td" style="left:461px;top:710.70px;width:79px;height:26.54px;background:#a32ed8;color:#ffffff"><span><i class="n">2</i></span></div>
<div class="ab td" style="left:541px;top:710.70px;width:79px;height:26.54px;background:#a32ed8;color:#ffffff"><span><i class="n">1.00</i></span></div>
<div class="ab td" style="left:621px;top:710.70px;width:59px;height:26.54px;background:#a32ed8;color:#ffffff"><span><i class="n">4.5000</i></span></div>
<div class="ab td" style="left:681px;top:710.70px;width:79px;height:26.54px;background:#a32ed8;color:#ffffff"><span><i class="n">44.34</i></span></div>
<div class="ab td" style="left:761px;top:710.70px;width:79px;height:26.54px;background:#a32ed8;color:#ffffff"><span><i class="n">2.7</i></span></div>
<div class="ab td" style="left:841px;top:710.70px;width:79px;height:26.54px;background:#a32ed8;color:#ffffff"><span>是</span></div>
<div class="ab td" style="left:921px;top:710.70px;width:79px;height:26.54px;background:#a32ed8;color:#ffffff"><span>预付费模式</span></div>
<div class="ab td" style="left:1001px;top:710.70px;width:79px;height:26.54px;background:#a32ed8;color:#ffffff"><span>开阀</span></div>
<div class="ab td" style="left:1081px;top:710.70px;width:139px;height:26.54px;background:#a32ed8;color:#ffffff"><span><i class="n">04-25</i> <i class="n">02:39:16</i></span></div>
<div class="ab cb" style="left:24px;top:717.70px;width:13px;height:13px"></div>
<div class="ab td" style="left:20px;top:738.24px;width:34px;height:26.54px;background:#add8e6;color:#676a6c"></div>
<div class="ab td" style="left:55px;top:738.24px;width:119px;height:26.54px;background:#add8e6;color:#676a6c"><span><i class="n">21503163</i></span></div>
<div class="ab td" style="left:175px;top:738.24px;width:59px;height:26.54px;background:#add8e6;color:#676a6c"><span><i class="n">1</i>号楼 <i class="n">5066</i></span></div>
<div class="ab td" style="left:235px;top:738.24px;width:69px;height:26.54px;background:#add8e6;color:#676a6c"><span><i class="n">1506</i></span></div>
<div class="ab td" style="left:305px;top:738.24px;width:75px;height:26.54px;background:#add8e6;color:#676a6c"><span>浙江兰溪市沁园</span></div>
<div class="ab td" style="left:381px;top:738.24px;width:79px;height:26.54px;background:#add8e6;color:#676a6c"><span><i class="n">100.00</i></span></div>
<div class="ab td" style="left:461px;top:738.24px;width:79px;height:26.54px;background:#add8e6;color:#676a6c"><span><i class="n">2</i></span></div>
<div class="ab td" style="left:541px;top:738.24px;width:79px;height:26.54px;background:#add8e6;color:#676a6c"><span><i class="n">1.00</i></span></div>
<div class="ab td" style="left:621px;top:738.24px;width:59px;height:26.54px;background:#add8e6;color:#676a6c"><span><i class="n">4.5000</i></span></div>
<div class="ab td" style="left:681px;top:738.24px;width:79px;height:26.54px;background:#add8e6;color:#676a6c"><span><i class="n">19.72</i></span></div>
<div class="ab td" style="left:761px;top:738.24px;width:79px;height:26.54px;background:#add8e6;color:#676a6c"><span><i class="n">12.4</i></span></div>
<div class="ab td" style="left:841px;top:738.24px;width:79px;height:26.54px;background:#add8e6;color:#676a6c"><span>否</span></div>
<div class="ab td" style="left:921px;top:738.24px;width:79px;height:26.54px;background:#add8e6;color:#676a6c"><span>预付费模式</span></div>
<div class="ab td" style="left:1001px;top:738.24px;width:79px;height:26.54px;background:#add8e6;color:#676a6c"><span>开阀</span></div>
<div class="ab td" style="left:1081px;top:738.24px;width:139px;height:26.54px;background:#add8e6;color:#676a6c"><span><i class="n">04-25</i> <i class="n">00:12:31</i></span></div>
<div class="ab cb" style="left:24px;top:745.24px;width:13px;height:13px"></div>
</body></html>
